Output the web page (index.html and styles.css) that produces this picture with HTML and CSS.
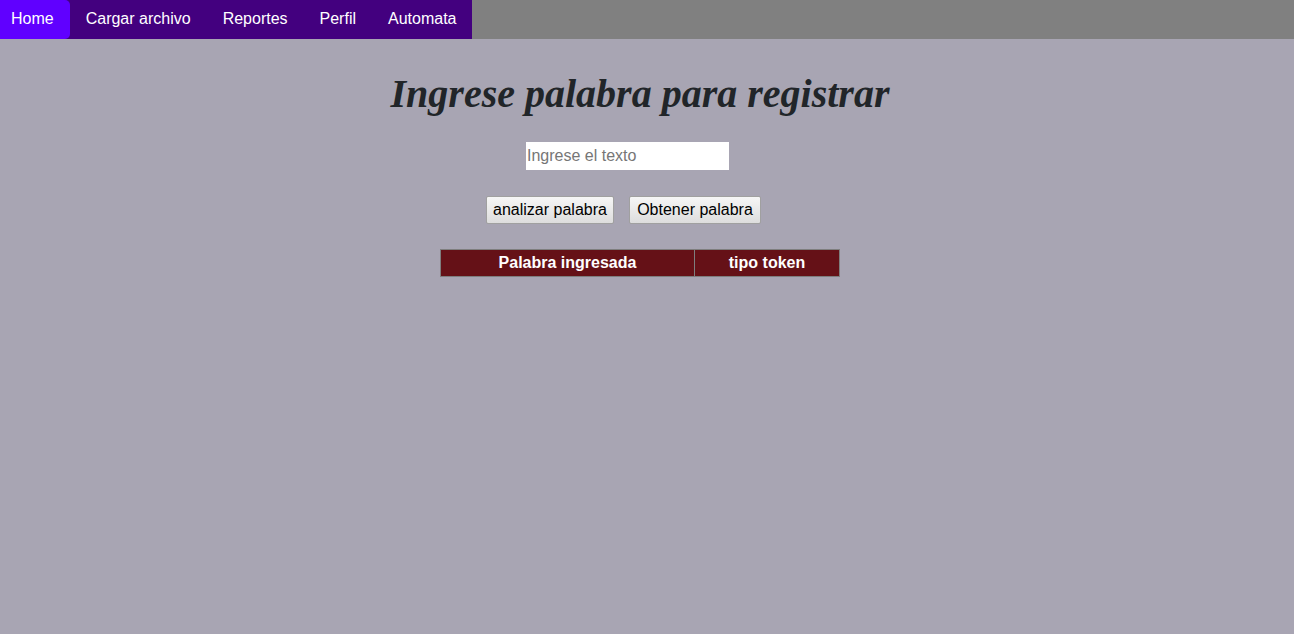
FILE: index.html
```html
<!DOCTYPE html>
<html lang="es">
<head>
<meta charset="utf-8">
<title>Registro</title>
<link rel="stylesheet" href="styles.css">
</head>
<body>
<nav class="topbar">
  <ul class="menu">
    <li><a class="menu-link active" href="#">Home</a></li>
    <li><a class="menu-link" href="#">Cargar archivo</a></li>
    <li><a class="menu-link" href="#">Reportes</a></li>
    <li><a class="menu-link" href="#">Perfil</a></li>
    <li><a class="menu-link" href="#">Automata</a></li>
  </ul>
</nav>
<main class="content">
  <h1 class="title">Ingrese palabra para registrar</h1>
  <div class="field-row">
    <input class="text-input" type="text" placeholder="Ingrese el texto">
  </div>
  <div class="button-row">
    <button class="btn btn-analyze">analizar palabra</button>
    <button class="btn btn-get">Obtener palabra</button>
  </div>
  <table class="result-table">
    <thead>
      <tr>
        <th class="col-word">Palabra ingresada</th>
        <th class="col-type">tipo token</th>
      </tr>
    </thead>
  </table>
</main>
</body>
</html>
```
FILE: styles.css
```css
html, body {
  margin: 0;
  padding: 0;
}
body {
  background: #a8a5b3;
  font-family: "Liberation Sans", Arial, sans-serif;
  font-size: 16px;
  color: #212529;
  width: 1294px;
  height: 634px;
}
.topbar {
  background: #808080;
  height: 39px;
  display: flex;
}
.menu {
  list-style: none;
  margin: 0;
  padding: 0;
  display: flex;
  background: #43007f;
  height: 39px;
}
.menu-link {
  display: block;
  height: 39px;
  line-height: 37px;
  padding: 0 16px 0 16px;
  color: #ffffff;
  text-decoration: none;
  font-size: 16px;
}
.menu-link.active {
  background: #6000ff;
  border-radius: 0 5px 5px 0;
  padding: 0 16px 0 11px;
}
.content {
  width: 1280px;
  display: flex;
  flex-direction: column;
  align-items: center;
}
.title {
  margin: 31px 0 0 0;
  font-family: "Liberation Serif", "Times New Roman", serif;
  font-style: italic;
  font-weight: bold;
  font-size: 40px;
  line-height: 48px;
  color: #212529;
}
.field-row {
  margin-top: 24px;
  padding-right: 25px;
  display: flex;
}
.text-input {
  width: 203px;
  height: 28px;
  box-sizing: border-box;
  border: none;
  padding: 0 1px;
  background: #ffffff;
  font-family: "Liberation Sans", Arial, sans-serif;
  font-size: 16px;
  color: #333;
}
.text-input::placeholder {
  color: #767676;
}
.button-row {
  margin-top: 26px;
  padding-right: 33px;
  display: flex;
  gap: 15px;
}
.btn {
  height: 28px;
  padding: 0;
  white-space: nowrap;
  text-align: center;
  font-family: "Liberation Sans", Arial, sans-serif;
  font-size: 16px;
  color: #000;
  background: linear-gradient(#f6f6f6, #dddddd);
  border: 1px solid #a0a0a0;
  border-radius: 2px;
}
.btn-analyze {
  width: 128px;
}
.btn-get {
  width: 132px;
}
.result-table {
  margin-top: 25px;
  border-collapse: collapse;
  border: 1px solid #7e7e7e;
}
.result-table th {
  background: #651117;
  color: #ffffff;
  font-weight: bold;
  font-size: 16px;
  height: 26px;
  padding: 0;
  border: 1px solid #7e7e7e;
  text-align: center;
}
.col-word {
  width: 253px;
}
.col-type {
  width: 144px;
}
```
